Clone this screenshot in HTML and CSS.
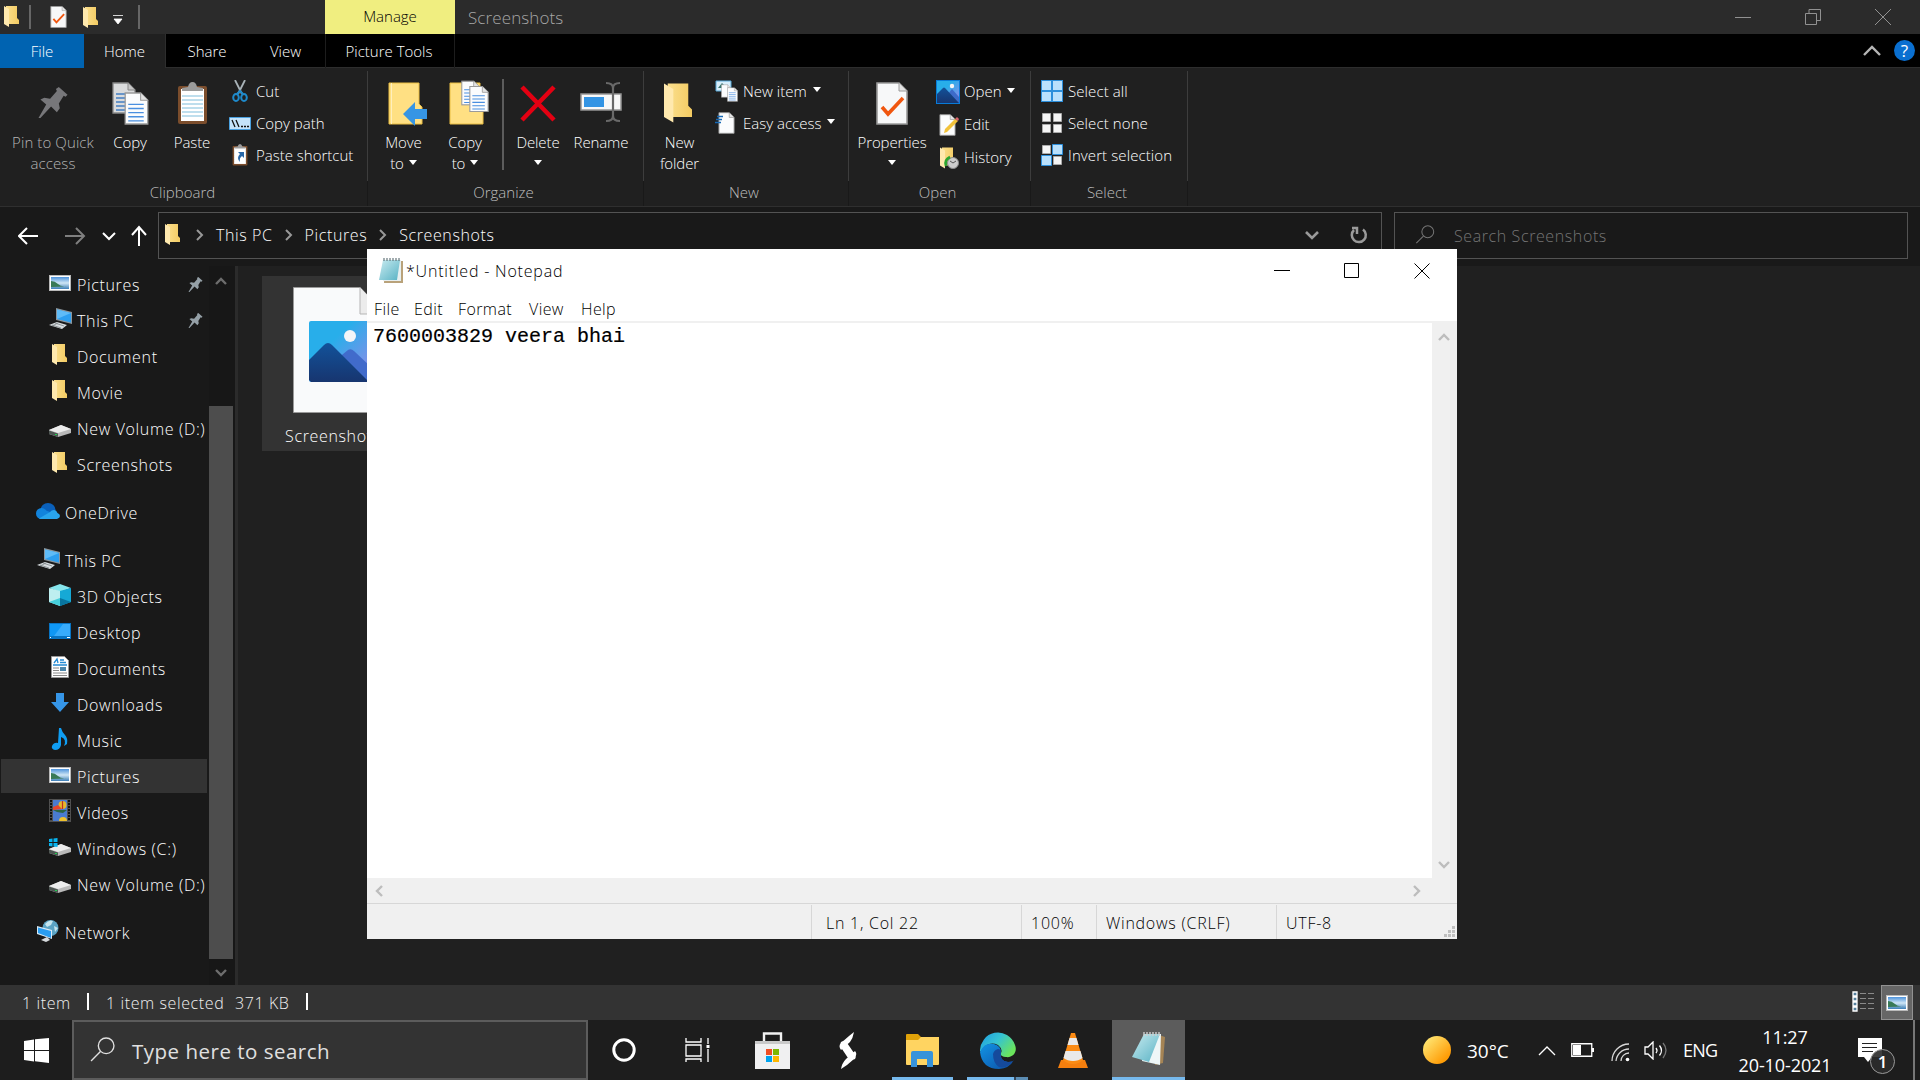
FILE: index.html
```html
<!DOCTYPE html>
<html lang="en">
<head>
<meta charset="utf-8">
<title>Screenshots</title>
<link rel="stylesheet" href="styles.css">
</head>
<body>
<svg class="defs" width="0" height="0">
  <defs>
    <linearGradient id="gFold" x1="0" x2="1"><stop offset="0" stop-color="#fbdf8d"/><stop offset="1" stop-color="#f3cb62"/></linearGradient>
    <linearGradient id="gSky" x1="0" y1="0" x2="1" y2="1"><stop offset=".35" stop-color="#28aeea"/><stop offset="1" stop-color="#9d86e8"/></linearGradient>
    <linearGradient id="gHill" x1="0" y1="0" x2="0" y2="1"><stop offset="0" stop-color="#12529a"/><stop offset="1" stop-color="#17356f"/></linearGradient>
    <linearGradient id="gPhoto" x1="0" y1="0" x2="0" y2="1"><stop offset="0" stop-color="#4d93dc"/><stop offset=".5" stop-color="#cfe6f5"/><stop offset="1" stop-color="#3d7fb8"/></linearGradient>
    <linearGradient id="gSun" x1="0" y1="0" x2="1" y2="1"><stop offset=".1" stop-color="#ffe774"/><stop offset=".8" stop-color="#ff9d07"/></linearGradient>
    <linearGradient id="gPad" x1="0" y1="0" x2="1" y2="1"><stop offset="0" stop-color="#c8ebf0"/><stop offset="1" stop-color="#58b2c4"/></linearGradient>
    <linearGradient id="gEdgeTop" x1="0" y1="0" x2="1" y2=".6"><stop offset="0" stop-color="#1e9be2"/><stop offset=".5" stop-color="#35c3d3"/><stop offset="1" stop-color="#6be45c"/></linearGradient>
    <linearGradient id="gEdgeLow" x1="0" y1="0" x2="1" y2="1"><stop offset="0" stop-color="#1294e4"/><stop offset="1" stop-color="#0c4fa5"/></linearGradient>
    <symbol id="folder" viewBox="0 0 15 21"><path d="M2 0h11v12l2 2v4H2z" fill="url(#gFold)"/><path d="M0 0l5 3v18l-5-3z" fill="#ffe9ae"/></symbol>
    <symbol id="sheet" viewBox="0 0 24 32"><path d="M1 1h15l7 7v23H1z" fill="#fbfcfd" stroke="#9a9a9a" stroke-width="1.3"/><path d="M16 1v7h7" fill="#e4e4e4" stroke="#9a9a9a"/></symbol>
    <symbol id="lined" viewBox="0 0 24 32"><use href="#sheet"/><path d="M4 12h15M4 16h15M4 20h15M4 24h15M4 28h15" stroke="#4a8fe0" stroke-width="1.3"/></symbol>
    <symbol id="checked" viewBox="0 0 32 43"><path d="M1 1h22l8 8v33H1z" fill="#f7f8f9" stroke="#9a9a9a" stroke-width="1.6"/><path d="M23 1v8h8" fill="#e4e4e4" stroke="#9a9a9a"/><path d="M6 25l6 7 15-16" fill="none" stroke="#f0560f" stroke-width="3.6"/></symbol>
    <symbol id="clip" viewBox="0 0 31 43"><rect x="1" y="4" width="29" height="38" rx="2" fill="#7b4d2c"/><path d="M4 7h23v32H4z" fill="#fff"/><path d="M5 14h21M5 18h21M5 22h21M5 26h21M5 30h21M5 34h21" stroke="#a9d3e8" stroke-width="1.3"/><path d="M5 9V6l6-1q1-5 4.500-5t4.500 5l6 1v3z" fill="#9b9b9b"/></symbol>
    <symbol id="pin" viewBox="0 0 30 32"><path d="M21 0l9 8-2 2-2-1-5 8 1 5-3 4-6-6L2 32H0l8-14-6-5 4-2 6 1 7-8-1-2z"/></symbol>
    <symbol id="photo" viewBox="0 0 22 16"><path d="M0 0h22v16H0z" fill="#b9b9b9"/><path d="M1 1h20v14H1z" fill="#fff"/><path d="M2 2h18v12H2z" fill="url(#gPhoto)"/><path d="M2 6q4 0 7 3t9 2q-7 1-16 1z" fill="#397a57"/></symbol>
    <symbol id="pc" viewBox="0 0 23 21"><path d="M7 0l16 4v12L7 12z" fill="#8b959c"/><path d="M8 1.500l14 3.500v9.500L8 11z" fill="#2d9ff0"/><path d="M8 1.500l14 3.500L8 11z" fill="#5fbcf8"/><path d="M0 17l8-3 10 3-5 4z" fill="#d8dde0"/><path d="M3 17l9 3M6 15l9 3M3 18l6-3" stroke="#7d8588" stroke-width=".8"/></symbol>
    <symbol id="drive" viewBox="0 0 22 12"><path d="M0 5L12 0l10 4v4L9 12l-9-3z" fill="#b9b9b9"/><path d="M0 5L12 0l10 4-13 4z" fill="#ececec"/><path d="M0 5.500l9 3V12l-9-3z" fill="#4d5552"/><path d="M6 9.500h2" stroke="#21d14f"/></symbol>
    <symbol id="cloud" viewBox="0 0 24 16"><ellipse cx="12" cy="7" rx="7.500" ry="7" fill="#0a60ba"/><ellipse cx="5.500" cy="10.500" rx="5.500" ry="5.500" fill="#1283dc"/><path d="M6 6l8 3-8 7z" fill="#1283dc"/><path d="M3 15.500L14 9q1.500-2 4-2 2.500.200 3.500 3 2.500.800 2.500 3t-3 3H6q-2 0-3-.5z" fill="#29a4ec"/></symbol>
    <symbol id="cube" viewBox="0 0 22 22"><path d="M0 4l11-4 11 4-11 4z" fill="#86e5ec"/><path d="M0 4l11 3v15L0 18z" fill="#bdeef0"/><path d="M11 7l11-3v14l-11 4z" fill="#16a9d6"/><path d="M0 18l11-4v8z" fill="#46cfdc"/><path d="M11 14l11 4-11 4z" fill="#08759f"/></symbol>
    <symbol id="desk" viewBox="0 0 22 16"><path d="M0 0h22v16H0z" fill="#0874c4"/><path d="M1 1h20v12H1z" fill="#0f97f5"/><path d="M14 1h7v12H5z" fill="#38abfb"/><path d="M1 14.500h1M18 14.500h3" stroke="#fff"/></symbol>
    <symbol id="docs" viewBox="0 0 18 22"><path d="M.5.500h13l4 4v17H.5z" fill="#fff" stroke="#999"/><path d="M3 7l3-4 1 4M9 4h4M9 6.500h6M2 9h14" stroke="#258bd4" stroke-width="1.300" fill="none"/><path d="M2 12h6M2 14.500h6M2 17h14M2 19.500h14" stroke="#8a8a8a"/><path d="M9 11h6v4H9z" fill="#4b86ab"/></symbol>
    <symbol id="down" viewBox="0 0 18 19"><path d="M5 0h8v9h5l-9 10L0 9h5z" fill="#3696e8"/></symbol>
    <symbol id="note" viewBox="0 0 16 22"><path d="M7 0h2q1 4 4 7t2 9l-3 2q3-7-3-9v8q-1 5-6 5-4-1-3-4 2-4 6-3z" fill="#0f9df2"/></symbol>
    <symbol id="film" viewBox="0 0 22 23"><path d="M0 0h22v23H0z" fill="#505050"/><path d="M4 1h14v21H4z" fill="#4a7bd0"/><path d="M2 1v21M20 1v21" stroke="#111" stroke-width="2" stroke-dasharray="2 1"/><ellipse cx="13.500" cy="6" rx="4" ry="4" fill="#e6b62b"/><path d="M13.500 2v8" stroke="#c03020" stroke-width="1.200"/><path d="M4 8l5-2 4 4-9 1z" fill="#e6462c"/><path d="M4 11h14l-4 3-6-1z" fill="#2c6544"/><path d="M10 22a4 4 0 0 1 8 0" fill="#eec12d"/></symbol>
    <symbol id="windrive" viewBox="0 0 22 18"><use href="#drive" y="6" width="22" height="12"/><path d="M0 1l3.500-.5V4H0zM4.500.400L8.500 0v4h-4zM0 5h3.500v3.500L0 8zM4.500 5h4v4l-4-.5z" fill="#08b4f0"/></symbol>
    <symbol id="net" viewBox="0 0 22 22"><circle cx="13.500" cy="8" r="8" fill="#5aa3c4"/><path d="M8 4q4-5 8-3l-2 4-4 2zM17 6l4 2-3 4z" fill="#c5e5ee"/><path d="M0 6l15 4v9L0 14z" fill="#d8eaf5"/><path d="M1 7.500l13 3.500v7L1 13z" fill="#299cf0"/><path d="M4 20l6-3 3 3-4 2z" fill="#d6dadd"/></symbol>
    <symbol id="hills" viewBox="0 0 24 24"><path d="M0 0h24v24H0z" fill="#087bd8"/><path d="M1 1h22v22H1z" fill="url(#gSky)"/><circle cx="16" cy="6" r="2.200" fill="#f6f6f6"/><path d="M12 14l4-5 7 8v6H12z" fill="#3d6bc9"/><path d="M1 14l6-6q1-1 2 0l14 15H1z" fill="url(#gHill)"/></symbol>
    <symbol id="pad" viewBox="0 0 24 25"><path d="M6 3h18v22H5z" fill="#b9a27a"/><path d="M5 2h17v21H4z" fill="#e7eff0"/><path d="M4 2h17l-3 20H0z" fill="url(#gPad)"/><path d="M5 0v3M8 0v3M11 0v3M14 0v3M17 0v3M20 0v3" stroke="#66777c" stroke-width="1.200"/></symbol>
    <symbol id="mag" viewBox="0 0 24 24"><circle cx="15.500" cy="8.500" r="7.500" fill="none" stroke="currentColor" stroke-width="1.300"/><path d="M10 14l-9 9" stroke="currentColor" stroke-width="1.300"/></symbol>
    <symbol id="chev" viewBox="0 0 12 8"><path d="M1 1l5 5 5-5" fill="none" stroke="currentColor" stroke-width="2.400"/></symbol>
  </defs>
</svg>

<div class="desktop">
  <header class="titlebar">
    <div class="quick">
      <svg class="q1" width="15" height="21"><use href="#folder"/></svg><i class="qsep"></i>
      <svg class="q2" width="17" height="22"><use href="#checked"/></svg>
      <svg class="q3" width="15" height="21"><use href="#folder"/></svg>
      <svg class="q4" width="10" height="9"><path d="M0 .500h10M1 4h8L5 9z" stroke="#fff" fill="#fff" stroke-width=".8"/></svg><i class="qsep"></i>
    </div>
    <div class="manage">Manage</div>
    <div class="wtitle">Screenshots</div>
    <div class="wbtns">
      <svg width="16" height="16"><path d="M0 8.500h16"/></svg>
      <svg width="16" height="16"><path d="M.5 4.500h11v11H.5zM4 4V.500h11.500v11H12"/></svg>
      <svg width="16" height="16"><path d="M0 0l16 16M16 0L0 16"/></svg>
    </div>
  </header>
  <nav class="tabs">
    <span class="tab file">File</span><span class="tab home">Home</span><span class="tab share">Share</span><span class="tab view">View</span><span class="tab ptools">Picture Tools</span>
    <svg class="collapse" width="18" height="11"><path d="M1 10l8-8 8 8" fill="none" stroke="#b5b5b5" stroke-width="2.400"/></svg>
    <span class="help">?</span>
  </nav>

  <section class="ribbon">
    <div class="group g1">
      <div class="tools">
        <div class="big pinb dim"><svg width="30" height="31" fill="#77777a"><use href="#pin" width="30" height="31"/></svg><span>Pin to Quick<br>access</span></div>
        <div class="big copyb"><svg width="37" height="43"><use href="#lined" width="24" height="32" opacity=".85"/><use href="#lined" x="12" y="10" width="25" height="33"/></svg><span>Copy</span></div>
        <div class="big pasteb"><svg width="31" height="43"><use href="#clip" width="31" height="43"/></svg><span>Paste</span></div>
        <div class="smalls">
          <div class="small"><svg width="22" height="22"><path d="M6 0l7 14M16 0L9 14" stroke="#a9b3b8" stroke-width="1.800"/><g fill="none" stroke="#1e8acb" stroke-width="2"><ellipse cx="7" cy="17.500" rx="2.800" ry="3.500"/><ellipse cx="15" cy="17.500" rx="2.800" ry="3.500"/><path d="M8 14l3-3 3 3"/></g></svg>Cut</div>
          <div class="small"><svg width="22" height="13"><path d="M.5.500h21v12H.5z" fill="#c4e3fa" stroke="#4aa0df"/><path d="M3 3l3 7M7 3l3 7" stroke="#111" stroke-width="1.300"/><path d="M12 9.500h8" stroke="#111" stroke-width="1.600" stroke-dasharray="2 1"/></svg>Copy path</div>
          <div class="small"><svg width="22" height="22"><use href="#clip" x="3" width="16" height="22"/><path d="M6 6h10v13H6z" fill="#fff"/><path d="M9 8h6v6l-2-2q-3 2-2 6-4-4 0-8z" fill="#2767a8"/></svg>Paste shortcut</div>
        </div>
      </div>
      <div class="caption">Clipboard</div>
    </div>
    <div class="group g2">
      <div class="tools">
        <div class="big w72"><svg class="mv" width="40" height="44"><path d="M1 1h30v21l3 3v17H1z" fill="#ffe083" stroke="#e9bd42"/><path d="M3.500 1v41" stroke="#ffefbd"/><path d="M15 32l12-12v7h12v10H27v7z" fill="#3695e4"/></svg><span>Move<br>to<i class="tri"></i></span></div>
        <div class="big w52"><svg class="cp" width="40" height="46"><path d="M1 4h30v20l3 3v18H1z" fill="#ffe083" stroke="#e9bd42"/><use href="#lined" x="12" width="19" height="28"/><use href="#lined" x="20" y="6" width="20" height="28"/></svg><span>Copy<br>to<i class="tri"></i></span></div>
        <i class="bar"></i>
        <div class="big w66"><svg class="del" width="36" height="37"><path d="M2 2l32 33M34 2L2 35" stroke="#e40012" stroke-width="4.500"/></svg><span>Delete<br><i class="tri solo"></i></span></div>
        <div class="big w60"><svg width="42" height="40"><path d="M1 12h40v16H1z" fill="#f8f8f8" stroke="#949494" stroke-width="1.500"/><path d="M4 15h20v10H4z" fill="#3394e4"/><path d="M26 1q7 0 7 5v28q0 5-7 5M40 1q-7 0-7 5v28q0 5 7 5" fill="none" stroke="#696969" stroke-width="2.200"/></svg><span>Rename</span></div>
      </div>
      <div class="caption">Organize</div>
    </div>
    <div class="group g3">
      <div class="tools">
        <div class="big w72"><svg class="nf" width="28" height="41"><use href="#folder" width="28" height="40"/></svg><span>New<br>folder</span></div>
        <div class="smalls">
          <div class="small"><svg width="23" height="22"><path d="M1 1h15v10H1z" fill="#d8eefa" stroke="#59a9d9"/><path d="M3 8l4-5 5 5z" fill="#37746c"/><use href="#sheet" x="6" y="4" width="10" height="14"/><use href="#lined" x="12" y="7" width="11" height="15"/></svg>New item<i class="tri"></i></div>
          <div class="small"><svg width="23" height="22"><use href="#sheet" x="3" width="17" height="22"/><path d="M2 4.500h6M1 7.500h6M0 10.500h6" stroke="#1769b5" stroke-width="1.500"/></svg>Easy access<i class="tri"></i></div>
        </div>
      </div>
      <div class="caption">New</div>
    </div>
    <div class="group g4">
      <div class="tools">
        <div class="big w86"><svg width="32" height="43"><use href="#checked" width="32" height="43"/></svg><span>Properties<br><i class="tri solo"></i></span></div>
        <div class="smalls">
          <div class="small"><svg width="24" height="24"><use href="#hills"/></svg>Open<i class="tri"></i></div>
          <div class="small"><svg width="24" height="22"><use href="#sheet" x="3" width="17" height="22"/><path d="M8 19l1-4L19 5l3 2-11 11z" fill="#f2c23a"/><path d="M19 5l2-2 2 2-1 2z" fill="#d9646c"/></svg>Edit</div>
          <div class="small"><svg width="24" height="22"><use href="#folder" x="4" width="15" height="22"/><circle cx="17" cy="16" r="5.500" fill="#ccc" stroke="#8b8b8b"/><path d="M14 14l3 2 3-2" stroke="#555" fill="none"/><path d="M10 19q-2-6 4-9" stroke="#2ca52f" stroke-width="2.600" fill="none"/></svg>History</div>
        </div>
      </div>
      <div class="caption">Open</div>
    </div>
    <div class="group g5">
      <div class="tools">
        <div class="smalls">
          <div class="small"><svg width="22" height="22"><path d="M0 0h22v22H0z" fill="#2d8fdb"/><path d="M1 1h9v9H1zM12 1h9v9h-9zM1 12h9v9H1zM12 12h9v9h-9z" fill="#b9e0fc"/></svg>Select all</div>
          <div class="small"><svg width="22" height="22"><path d="M1.500 1.500h8v8h-8zM12.500 1.500h8v8h-8zM1.500 12.500h8v8h-8zM12.500 12.500h8v8h-8z" fill="#f5f5f5" stroke="#aaa"/></svg>Select none</div>
          <div class="small"><svg width="22" height="22"><path d="M1.500 1.500h8v8h-8zM12.500 12.500h8v8h-8z" fill="#f5f5f5" stroke="#aaa"/><path d="M11.500.500h10v10h-10zM.5 11.500h10v10H.5z" fill="#b9e0fc" stroke="#2d8fdb"/></svg>Invert selection</div>
        </div>
      </div>
      <div class="caption">Select</div>
    </div>
  </section>

  <section class="navbar">
    <div class="arrows">
      <svg width="130" height="24" fill="none" stroke="#fff" stroke-width="2"><path d="M20 12H2M9 4l-8 8 8 8"/><path d="M47 12h18M58 4l8 8-8 8" stroke="#7f7f7f"/><path d="M85 9l6 6 6-6"/><path d="M121 22V4M114 11l7-8 7 8"/></svg>
    </div>
    <div class="address">
      <svg width="15" height="21"><use href="#folder"/></svg>
      <svg class="gt" width="8" height="12"><path d="M1 1l5 5-5 5"/></svg><span class="c1">This PC</span>
      <svg class="gt" width="8" height="12"><path d="M1 1l5 5-5 5"/></svg><span class="c2">Pictures</span>
      <svg class="gt" width="8" height="12"><path d="M1 1l5 5-5 5"/></svg><span class="c3">Screenshots</span>
      <svg class="dd" width="14" height="10"><path d="M1 2l6 6 6-6" fill="none" stroke="#9a9a9a" stroke-width="2.600"/></svg>
      <svg class="re" width="18" height="18"><path d="M13 3.500A7 7 0 1 1 4 4M2 2h5v6" fill="none" stroke="#9a9a9a" stroke-width="2.500"/></svg>
    </div>
    <div class="find"><svg width="20" height="19"><use href="#mag"/></svg><span>Search Screenshots</span></div>
  </section>

  <main class="main">
    <aside class="tree">
      <div class="row"><svg width="22" height="16"><use href="#photo"/></svg><span>Pictures</span><svg class="tpin" width="15" height="15"><use href="#pin"/></svg></div>
      <div class="row"><svg width="23" height="21"><use href="#pc"/></svg><span>This PC</span><svg class="tpin" width="15" height="15"><use href="#pin"/></svg></div>
      <div class="row"><svg width="20" height="21"><use href="#folder"/></svg><span>Document</span></div>
      <div class="row"><svg width="20" height="21"><use href="#folder"/></svg><span>Movie</span></div>
      <div class="row dr"><svg width="22" height="12"><use href="#drive"/></svg><span>New Volume (D:)</span></div>
      <div class="row"><svg width="20" height="21"><use href="#folder"/></svg><span>Screenshots</span></div>
      <div class="row top"><svg width="24" height="16"><use href="#cloud"/></svg><span>OneDrive</span></div>
      <div class="row top"><svg width="23" height="21"><use href="#pc"/></svg><span>This PC</span></div>
      <div class="row"><svg width="22" height="22"><use href="#cube"/></svg><span>3D Objects</span></div>
      <div class="row"><svg width="22" height="16"><use href="#desk"/></svg><span>Desktop</span></div>
      <div class="row"><svg width="22" height="22"><use href="#docs"/></svg><span>Documents</span></div>
      <div class="row"><svg width="22" height="19"><use href="#down"/></svg><span>Downloads</span></div>
      <div class="row"><svg width="22" height="22"><use href="#note"/></svg><span>Music</span></div>
      <div class="row sel"><svg width="22" height="16"><use href="#photo"/></svg><span>Pictures</span></div>
      <div class="row"><svg width="22" height="23"><use href="#film"/></svg><span>Videos</span></div>
      <div class="row"><svg width="22" height="18"><use href="#windrive"/></svg><span>Windows (C:)</span></div>
      <div class="row dr"><svg width="22" height="12"><use href="#drive"/></svg><span>New Volume (D:)</span></div>
      <div class="row top"><svg width="22" height="22"><use href="#net"/></svg><span>Network</span></div>
    </aside>
    <div class="scroll"><svg class="up" width="12" height="8"><use href="#chev"/></svg><i class="thumb"></i><svg class="dn" width="12" height="8"><use href="#chev"/></svg></div>
    <div class="files">
      <div class="tile">
        <svg width="94" height="126"><path d="M.5.500H67L93.500 28v97.500H.5z" fill="#f9fafb" stroke="#9a9a9a"/><path d="M67 .500V27h26" fill="#ececec" stroke="#b5b5b5"/><rect x="16" y="34" width="62" height="61" rx="2" fill="url(#gSky)"/><circle cx="57" cy="49" r="6" fill="#f3f5f8"/><path d="M44 72l11-9q3-2 6 1l17 16v15H50z" fill="#416bcb"/><path d="M16 73l15-15q4-4 8 0l37 37H18l-2-2z" fill="url(#gHill)"/></svg>
        <span>Screenshot</span>
      </div>
    </div>
  </main>

  <footer class="status">
    <span class="s1">1 item</span><i></i><span class="s2">1 item selected</span><span class="s3">371 KB</span><i></i>
    <svg class="list" width="22" height="22"><path d="M1 1h4v4H1zM1 6h4v4H1zM1 11h4v4H1zM1 16h4v4H1z" fill="#56809d" stroke="#fff" stroke-width="1.300"/><path d="M8 2.500h6M16 2.500h6M8 7.500h6M16 7.500h6M8 12.500h6M16 12.500h6M8 17.500h6M16 17.500h6" stroke="#8a8a8a"/></svg>
    <div class="thumbs"><svg width="22" height="16"><use href="#photo"/></svg></div>
  </footer>

  <div class="taskbar">
    <div class="start"><svg width="25" height="25"><path d="M0 3l10-1.500V12H0zM11 1.300L25 0v12H11zM0 13h10v10.500L0 22zM11 13h14v12l-14-1.700z" fill="#fff"/></svg></div>
    <div class="tsearch"><svg width="25" height="25"><use href="#mag"/></svg><span>Type here to search</span></div>
    <div class="app cort"><svg width="24" height="24"><circle cx="12" cy="12" r="10.200" fill="none" stroke="#fff" stroke-width="3"/></svg></div>
    <div class="app tv"><svg width="25" height="24" fill="none" stroke="#fff" stroke-width="1.300"><path d="M1 0v4h15V0M1 7h15v11H1zM1 24v-3h15v3M23 0v6M23 11v13"/><path d="M21.500 7h3v3h-3z" fill="#fff" stroke="none"/></svg></div>
    <div class="app"><svg width="35" height="37"><path d="M9 12V1.500h17V12" fill="none" stroke="#f2f2f2" stroke-width="2.400"/><path d="M0 9h35v28H0z" fill="#f0f0f1"/><path d="M0 9h35v3H0z" fill="#c9c9c9"/><path d="M11 17h6v6h-6z" fill="#f04e23"/><path d="M18 17h6v6h-6z" fill="#7db700"/><path d="M11 24h6v6h-6z" fill="#00a3ee"/><path d="M18 24h6v6h-6z" fill="#feb800"/></svg></div>
    <div class="app"><svg width="18" height="37" fill="#fff"><path d="M15 0q-1 6-4 10L2 18q-3-4 0-7l8-7zM2 10l4-2 9 13q3 3 1 6l-5 2-8-12q-3-3-1-7zM16 19q3 3-1 8l-7 6-6 4q1-6 5-10z"/></svg></div>
    <div class="app run"><svg width="33" height="33"><path d="M0 1q0-1 1-1h11l3 3h17q1 0 1 1v10H0z" fill="#e0a209"/><path d="M0 6h12l3-3h18v27q0 1-1 1H1q-1 0-1-1z" fill="#ffd461"/><path d="M5 33V19q0-2 2-2h18q2 0 2 2v14h-6v-8H11v8z" fill="#3793da"/></svg></div>
    <div class="app run edge"><svg width="36" height="37"><path d="M0 20A18 18.500 0 0 1 35 13c3 8-3 13-9 12-4 0-6-2-5-4q2-4-3-8-10-5-18 7z" fill="url(#gEdgeTop)"/><path d="M0 20q4-10 14-8 7 2 7 8-2 9 7 10 4 1 6-2a18 18 0 0 1-15 9Q2 37 0 20z" fill="url(#gEdgeLow)"/><path d="M13 22q1-4 5-5 3 0 3 3-2 9 7 10l5-1q-6 8-14 6-6-4-6-13z" fill="#154a9c"/></svg></div>
    <div class="app"><svg width="30" height="35"><path d="M3 27h24l3 8H0z" fill="#f57f0e"/><path d="M13 0h4l8 27q-4 4-10 4T5 27z" fill="#fb8b14"/><path d="M11.500 5h7l2 7h-11zM7.500 18h15l2 7q-4 3-9.500 3t-9.500-3z" fill="#e9e9e9"/></svg></div>
    <div class="app act"><svg width="33" height="33"><path d="M27 3l6 2-2 26-8 2z" fill="#a58455"/><path d="M13 2h16l-1 31-18-4z" fill="#eef6f7"/><path d="M12 2h16L17 30 0 25z" fill="url(#gPad)"/><path d="M12 0v4M15 0v4M18 0v4M21 0v4M24 0v4M27 0v4" stroke="#cfcfcf" stroke-width="1.400"/></svg></div>
    <div class="tray">
      <svg class="sun" width="28" height="28"><circle cx="14" cy="14" r="14" fill="url(#gSun)"/></svg>
      <span class="temp">30°C</span>
      <svg class="caret" width="18" height="11"><path d="M1 10l8-8 8 8" fill="none" stroke="#fff" stroke-width="1.300"/></svg>
      <svg class="bat" width="23" height="14"><path d="M.75.750h20v12.500h-20z" fill="none" stroke="#fff" stroke-width="1.300"/><path d="M2 2h8v10H2zM21 5h2v4h-2z" fill="#fff"/></svg>
      <svg class="wifi" width="19" height="19" fill="none" stroke="#d8d8d8" stroke-width="1.300"><path d="M1 18A17 17 0 0 1 18 1M5 18A13 13 0 0 1 18 6M10 18a8 8 0 0 1 8-8"/><circle cx="16.500" cy="16.500" r="1.800" fill="#fff" stroke="none"/></svg>
      <svg class="vol" width="23" height="19" fill="none" stroke="#fff" stroke-width="1.300"><path d="M1 6h3l5-5v17l-5-5H1z"/><path d="M12 7q2 2.500 0 5M15.500 4.500q4 5 0 10"/><path d="M19 2q6 7 0 15" stroke="#777"/></svg>
      <span class="lang">ENG</span>
      <div class="clock"><span>11:27</span><span class="date">20-10-2021</span></div>
      <div class="notif"><svg width="24" height="24"><path d="M0 0h24v19H14l-4 5-4-5H0z" fill="#fff"/><path d="M4 5.500h15M4 9.500h15M4 13.500h11" stroke="#222"/></svg><b>1</b></div>
      <i class="peek"></i>
    </div>
  </div>

  <section class="notepad">
    <div class="ntitle"><svg width="24" height="25"><use href="#pad"/></svg><span>*Untitled - Notepad</span>
      <div class="nbtns"><svg width="16" height="16"><path d="M0 7.500h16"/></svg><svg width="16" height="16"><path d="M.5.500h14v14H.5z"/></svg><svg width="16" height="16"><path d="M.5.500l15 15M15.500.500l-15 15"/></svg></div>
    </div>
    <div class="nmenu"><span class="m1">File</span><span class="m2">Edit</span><span class="m3">Format</span><span class="m4">View</span><span class="m5">Help</span></div>
    <div class="nbody"><div class="ntext">7600003829 veera bhai</div><div class="nv"><svg class="up" width="12" height="8"><use href="#chev"/></svg><svg width="12" height="8"><use href="#chev"/></svg></div></div>
    <div class="nh"><svg class="lf" width="12" height="8"><use href="#chev"/></svg><svg class="rt" width="12" height="8"><use href="#chev"/></svg></div>
    <div class="nstat"><span></span><span class="n1">Ln 1, Col 22</span><span class="n2">100%</span><span class="n3">Windows (CRLF)</span><span class="n4">UTF-8</span>
      <svg class="grip" width="12" height="12"><path d="M8 0h3v3H8zM4 4h3v3H4zM8 4h3v3H8zM0 8h3v3H0zM4 8h3v3H4zM8 8h3v3H8z" fill="#bfbfbf"/></svg></div>
  </section>
</div>
</body>
</html>
```
FILE: styles.css
```css
* { box-sizing: border-box; }
body { margin: 0; background: #202020; overflow: hidden; }
.defs { display: block; position: absolute; }
svg { display: block; flex: none; }
.desktop { position: relative; width: 1920px; height: 1080px; display: flex; flex-direction: column; font: 300 15px/21px "Open Sans", "Noto Sans", sans-serif; color: #fff; white-space: nowrap; overflow: hidden; }

.titlebar { height: 34px; background: #2b2b2b; display: flex; align-items: center; flex: none; }
.quick { width: 325px; display: flex; align-items: center; padding-left: 4px; }
.qsep { width: 2px; height: 24px; border: 1px solid #666; }
.q1 { margin: -2px 10px 0 0; }
.q2 { margin-left: 19px; }
.q3 { margin-left: 16px; }
.q4 { margin: 4px 15px 0 15px; }
.manage { width: 130px; height: 34px; background: #f0ee80; color: #000; text-align: center; line-height: 33px; font-size: 15px; }
.wtitle { padding-left: 13px; color: #a6a6a6; font-size: 17px; letter-spacing: .1px; }
.wbtns { margin-left: auto; display: flex; gap: 54px; padding-right: 29px; }
.wbtns svg, .nbtns svg { fill: none; stroke: #919191; }

.tabs { height: 34px; background: #000; display: flex; align-items: center; flex: none; border-bottom: 1px solid #2d2d2d; }
.tab { height: 34px; line-height: 34px; text-align: center; flex: none; }
.file { width: 84px; background: #0063b1; }
.home { width: 82px; background: #202020; border-right: 1px solid #2d2d2d; }
.share { width: 82px; }
.view { width: 77px; padding-right: 2px; }
.ptools { width: 130px; border: solid #1d1d1d; border-width: 0 1px; padding-right: 2px; }
.collapse { margin-left: auto; }
.help { width: 21px; height: 21px; border-radius: 50%; background: #0a6fd0; text-align: center; margin: 0 5px 0 13px; line-height: 21px; font-weight: 400; font-size: 17px; }

.ribbon { height: 139px; display: flex; background: #202020; border-bottom: 1px solid #2f2f2f; flex: none; }
.group { flex: none; border-right: 1px solid; border-image: linear-gradient(#202020 4px, #3d3d3d 4px, #3d3d3d 112px, #191919 112px) 1; display: flex; flex-direction: column; }
.g1 { width: 368px; } .g2 { width: 276px; } .g3 { width: 205px; } .g4 { width: 182px; } .g5 { width: 157px; }
.tools { display: flex; height: 112px; }
.caption { height: 26px; line-height: 24px; text-align: center; color: #bdbdbd; padding-right: 4px; }
.g1 .caption { padding-right: 2px; }
.big { display: flex; flex-direction: column; align-items: center; text-align: center; flex: none; letter-spacing: -.1px; }
.big svg { height: 64px; overflow: visible; padding-top: 14px; }
.pinb { width: 106px; letter-spacing: .1px; } .pinb svg { padding-top: 19px; } .dim { color: #b5b5b5; }
.copyb { width: 48px; } .pasteb { width: 76px; }
.w72 { width: 71px; } .w52 { width: 52px; } .w66 { width: 66px; } .w60 { width: 60px; } .w86 { width: 86px; }
.mv, .cp { margin-left: 8px; } .cp { padding-top: 11px !important; } .del { padding-top: 17px !important; } .nf { padding-top: 15px !important; }
.g3 .nf { margin-left: -3px; }
.bar { width: 2px; height: 91px; background: #5c5c5c; margin: 11px 1px 0 11px; }
.tri { display: inline-block; border: 4px solid transparent; border-top: 5px solid #fff; border-bottom: 0; margin-left: 5px; vertical-align: 4px; }
.solo { margin-left: 0; }
.smalls { display: flex; flex-direction: column; padding-top: 7px; }
.small { height: 32px; display: flex; align-items: center; gap: 5px; }
.small .tri { margin-left: 1px; margin-bottom: 3px; }
.g1 .smalls { margin-left: -1px; } .g1 .small { gap: 5px; }
.g4 .small { height: 33px; gap: 4px; } .g4 .smalls { margin-left: 1px; }
.g5 { padding-left: 10px; } .g5 .caption { padding-right: 14px; }
.g5 .small { letter-spacing: .1px; }

.navbar { height: 59px; background: #191919; display: flex; flex: none; font-size: 16px; padding-top: 5px; letter-spacing: .6px; }
.arrows { width: 158px; padding: 12px 0 0 18px; }
.address { width: 1224px; height: 47px; border: 1px solid #535353; display: flex; align-items: center; padding: 0 13px 2px 6px; }
.address > span { flex: none; padding-top: 2px; }
.gt { fill: none; stroke: #989898; stroke-width: 2; }
.address .gt { margin: 0 12px 0 16px; }
.address span + .gt { margin: 0 12px 0 12px; }
.dd { margin-left: auto; } .re { margin-left: 31px; }
.find { margin-left: 12px; width: 514px; height: 47px; border: 1px solid #535353; display: flex; align-items: center; color: #757575; padding-left: 20px; gap: 19px; }
.find svg { margin-top: -3px; }
.find span { padding-top: 1px; }

.main { height: 719px; display: flex; flex: none; }
.tree { width: 209px; background: #191919; font-size: 16px; overflow: hidden; letter-spacing: .65px; }
.row { height: 36px; display: flex; align-items: center; padding-left: 49px; }
.row > svg:first-child { margin-top: -3px; }
.row span { padding-top: 2px; flex: none; }
.row > svg + span { margin-left: 6px; }
.row > svg[width="20"] { width: 15px; margin-left: 3px; margin-right: 4px; }
.row > svg[width="23"] + span { margin-left: 5px; }
.row.top { margin-top: 12px; padding-left: 37px; }
.row.top > svg[width="24"] { margin-left: -1px; }
.row.top > svg[width="24"] + span { margin-left: 5px; }
.row.dr > svg:first-child { margin-top: 6px; }
.row.sel { background: #333; background-clip: content-box; margin: 0 2px 0 1px; padding: 1px 0; }
.row.sel > svg { margin-left: 48px; }
.tpin { fill: #95a0a7; margin-left: auto; margin-right: 6px; }
.scroll { width: 26px; background: #171717; display: flex; flex-direction: column; align-items: flex-start; color: #6d6d6d; }
.up { transform: rotate(180deg); }
.scroll .up { margin: 11px 0 121px 6px; }
.thumb { width: 24px; height: 553px; background: #4d4d4d; }
.scroll .dn { margin: 10px 0 0 6px; }
.files { flex: 1; border-left: 3px solid #2b2b2b; background: #202020; padding: 10px 0 0 24px; }
.tile { width: 156px; height: 175px; background: #333; display: flex; flex-direction: column; padding: 11px 0 0 31px; }
.tile span { margin: 13px 0 0 -8px; font-size: 16px; letter-spacing: .65px; }

.status { height: 35px; background: #333; display: flex; align-items: center; flex: none; font-size: 16px; padding: 0 7px 0 22px; color: #f0f0f0; letter-spacing: .6px; }
.status span { padding-top: 2px; }
.status i { width: 2px; height: 17px; background: #fff; margin-top: -2px; }
.s1 { width: 65px; } .s2 { margin-left: 17px; width: 129px; } .s3 { width: 71px; }
.list { margin-left: auto; margin-top: -1px; }
.thumbs { width: 32px; height: 35px; background: #666; border: 1px solid #919191; display: flex; align-items: center; justify-content: center; margin-left: 7px; }

.taskbar { height: 60px; background: #1d1d1d; display: flex; flex: none; }
.start { width: 72px; display: flex; align-items: center; padding-left: 24px; }
.tsearch { width: 516px; background: #333; border: 2px solid #5c5c5c; display: flex; align-items: center; padding-left: 16px; gap: 17px; font: 400 20.500px "Open Sans", sans-serif; color: #e0e0e0; letter-spacing: .5px; }
.tsearch svg { margin-top: -2px; }
.tsearch span { padding-top: 2px; }
.app { width: 75px; display: flex; align-items: center; justify-content: center; position: relative; }
.cort { width: 72px; } .tv { width: 74px; }
.tv + .app { margin-left: 1px; }
.run { background: linear-gradient(#76b9ed, #76b9ed) center bottom / 61px 3px no-repeat; }
.edge { background: linear-gradient(90deg, #76b9ed 47px, #345 47px, #345 49px, #5b8cb3 49px) center bottom / 61px 3px no-repeat; }
.act { width: 73px; background: #5c5c5c; border-bottom: 3px solid #76b9ed; margin-left: 2px; }
.tray { margin-left: auto; display: flex; align-items: center; font-size: 18px; font-weight: 400; padding-right: 5px; }
.temp { width: 54px; margin-left: 16px; font-size: 19px; letter-spacing: 0; padding-top: 3px; }
.caret { margin-left: 17px; } .bat { margin-left: 15px; } .wifi { margin-left: 17px; margin-top: 4px; } .vol { margin-left: 14px; }
.lang { width: 38px; margin-left: 16px; letter-spacing: -.8px; }
.clock { width: 104px; margin-left: 12px; text-align: center; display: flex; flex-direction: column; line-height: 28px; letter-spacing: -.1px; padding-top: 1px; }
.notif { width: 38px; margin-left: 21px; position: relative; }
.notif b { position: absolute; left: 12px; top: 11px; width: 25px; height: 25px; border: 1px solid #999; border-radius: 50%; background: #2c2c2ce8; font: 600 17px/23px "Open Sans", sans-serif; text-align: center; }
.peek { width: 2px; height: 60px; background: #777; margin-left: 17px; }

.notepad { position: absolute; left: 367px; top: 249px; width: 1090px; height: 690px; background: #fff; color: #000; display: flex; flex-direction: column; }
.ntitle { height: 44px; display: flex; align-items: center; padding: 0 27px 0 12px; font-size: 16px; letter-spacing: .8px; }
.ntitle > svg { margin-top: -2px; }
.ntitle > span { margin-left: 3px; padding-top: 1px; }
.nbtns { margin-left: auto; display: flex; gap: 54px; }
.nbtns svg { stroke: #000; margin-top: -1px; }
.nmenu { height: 30px; display: flex; border-bottom: 2px solid #f0f0f0; font-size: 16px; line-height: 33px; padding-left: 7px; letter-spacing: .4px; }
.m1 { width: 40px; } .m2 { width: 44px; } .m3 { width: 71px; } .m4 { width: 52px; }
.nbody { height: 555px; display: flex; }
.ntext { flex: 1; font: 400 20px/28px "Liberation Mono", monospace; padding-left: 6px; -webkit-text-stroke: .2px #000; }
.nv { width: 25px; background: #f0f0f0; margin-top: -2px; display: flex; flex-direction: column; align-items: center; justify-content: space-between; padding: 12px 1px 9px 0; color: #bdbdbd; }
.nh { height: 25px; background: #f0f0f0; display: flex; align-items: center; justify-content: space-between; padding: 0 34px 0 6px; color: #bdbdbd; }
.lf { transform: rotate(90deg); } .rt { transform: rotate(-90deg); }
.nstat { height: 36px; border-top: 1px solid #d7d7d7; background: #f0f0f0; display: grid; grid-template-columns: 444px 210px 75px 180px 1fr; position: relative; font-size: 16px; line-height: 37px; padding-top: 1px; letter-spacing: .75px; }
.nstat span { height: 34px; }
.nstat span + span { border-left: 1px solid #d7d7d7; padding-left: 9px; }
.nstat .n1 { padding-left: 14px; }
.grip { position: absolute; right: 1px; bottom: 1px; }
```
